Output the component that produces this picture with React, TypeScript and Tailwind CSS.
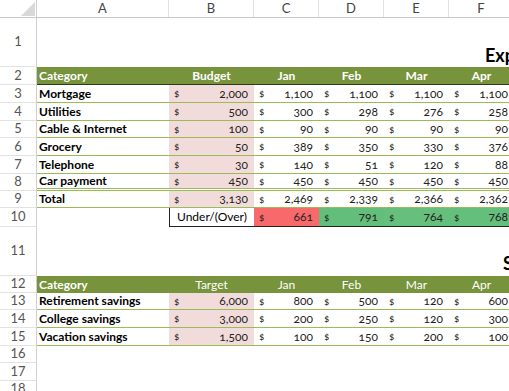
import React from 'react'

const cols = [
  { key: 'A', w: 'w-[132px]' },
  { key: 'B', w: 'w-[85px]' },
  { key: 'C', w: 'w-[65px]' },
  { key: 'D', w: 'w-[65px]' },
  { key: 'E', w: 'w-[65px]' },
  { key: 'F', w: 'w-[65px]' },
]

const months = ['Jan', 'Feb', 'Mar', 'Apr']

const expenses = [
  { name: 'Mortgage', budget: '2,000', vals: ['1,100', '1,100', '1,100', '1,100'], h: 'h-[18px]' },
  { name: 'Utilities', budget: '500', vals: ['300', '298', '276', '258'], h: 'h-[18px]' },
  { name: 'Cable & Internet', budget: '100', vals: ['90', '90', '90', '90'], h: 'h-[17px]' },
  { name: 'Grocery', budget: '50', vals: ['389', '350', '330', '376'], h: 'h-[18px]' },
  { name: 'Telephone', budget: '30', vals: ['140', '51', '120', '88'], h: 'h-[18px]' },
  { name: 'Car payment', budget: '450', vals: ['450', '450', '450', '450'], h: 'h-[17px]' },
]

const savings = [
  { name: 'Retirement savings', target: '6,000', vals: ['800', '500', '120', '600'], h: 'h-[17px]' },
  { name: 'College savings', target: '3,000', vals: ['200', '250', '120', '300'], h: 'h-[18px]' },
  { name: 'Vacation savings', target: '1,500', vals: ['100', '150', '200', '100'], h: 'h-[18px]' },
]

function Row({ n, h, children }: { n: number; h: string; children?: React.ReactNode }) {
  return (
    <div className={`flex ${h}`}>
      <div className="w-[37px] shrink-0 flex items-center justify-center border-r border-b border-r-[#cfcfcf] border-b-[#e2e2e2] text-[13px] text-[#555]">
        {n}
      </div>
      <div className="flex flex-1 min-w-0">{children}</div>
    </div>
  )
}

function Money({ v, w, bg = '', extra = '' }: { v: string; w: string; bg?: string; extra?: string }) {
  return (
    <div className={`${w} shrink-0 flex items-center justify-between pl-[5px] pr-[6px] text-[12px] text-[#222] oldstyle-nums ${bg} ${extra}`}>
      <span className="text-[10px]">$</span>
      <span>{v}</span>
    </div>
  )
}

export default function App() {
  return (
    <div className="w-[509px] h-[391px] overflow-hidden bg-white font-['Lato','Liberation_Sans',sans-serif] text-black">
      {/* column header */}
      <div className="flex h-[18px] border-b border-[#c8c8c8]">
        <div className="w-[37px] shrink-0 border-r border-[#cfcfcf] relative">
          <svg width="37" height="17" className="absolute left-0 top-0">
            <polygon points="21,16 35,16 35,2" fill="#d8d8d8" />
          </svg>
        </div>
        {cols.map((c) => (
          <div
            key={c.key}
            className={`${c.w} shrink-0 flex items-center justify-center border-r border-[#e0e0e0] text-[13px] text-[#444]`}
          >
            {c.key}
          </div>
        ))}
      </div>

      <Row n={1} h="h-[49px]">
        <div className="flex items-end pb-[3px] pl-[448px] whitespace-nowrap text-[18px] font-bold leading-none">
          Expenses
        </div>
      </Row>

      <Row n={2} h="h-[18px]">
        <div className="flex bg-[#77933c] text-white font-bold text-[12px] border-b border-[#2f3a18]">
          <div className="w-[132px] shrink-0 pl-[2px] flex items-center">Category</div>
          <div className="w-[85px] shrink-0 flex items-center justify-center">Budget</div>
          {months.map((m) => (
            <div key={m} className="w-[65px] shrink-0 flex items-center justify-center">
              {m}
            </div>
          ))}
        </div>
      </Row>

      {expenses.map((r, i) => (
        <Row key={r.name} n={i + 3} h={r.h}>
          <div
            className={`flex ${
              i === expenses.length - 1
                ? 'border-b-[3px] border-double border-[#9bbb59]'
                : 'border-b border-[#9bbb59]'
            }`}
          >
            <div className="w-[132px] shrink-0 pl-[2px] flex items-center font-bold text-[12px]">{r.name}</div>
            <Money v={r.budget} w="w-[85px]" bg="bg-[#f2dcdb]" />
            {r.vals.map((v, j) => (
              <Money key={j} v={v} w="w-[65px]" />
            ))}
          </div>
        </Row>
      ))}

      <Row n={9} h="h-[17px]">
        <div className="flex border-b border-[#9bbb59]">
          <div className="w-[132px] shrink-0 pl-[2px] flex items-center font-bold text-[12px]">Total</div>
          <Money v="3,130" w="w-[85px]" bg="bg-[#f2dcdb]" />
          {['2,469', '2,339', '2,366', '2,362'].map((v, j) => (
            <Money key={j} v={v} w="w-[65px]" />
          ))}
        </div>
      </Row>

      <Row n={10} h="h-[19px]">
        <div className="flex">
          <div className="w-[132px] shrink-0" />
          <div className="w-[85px] shrink-0 flex items-center justify-center text-[12px] border-l border-b border-[#222]">
            Under/(Over)
          </div>
          <Money v="661" w="w-[65px]" bg="bg-[#f8696b]" extra="border-b border-[#222]" />
          <Money v="791" w="w-[65px]" bg="bg-[#63be7b]" extra="border-b border-[#222]" />
          <Money v="764" w="w-[65px]" bg="bg-[#66bf7c]" extra="border-b border-[#222]" />
          <Money v="768" w="w-[65px]" bg="bg-[#65bf7c]" extra="border-b border-[#222]" />
        </div>
      </Row>

      <Row n={11} h="h-[49px]">
        <div className="flex items-end pb-[4px] pl-[466px] whitespace-nowrap text-[18px] font-bold leading-none">
          Savings
        </div>
      </Row>

      <Row n={12} h="h-[17px]">
        <div className="flex bg-[#77933c] text-white text-[12px]">
          <div className="w-[132px] shrink-0 pl-[2px] flex items-center font-bold">Category</div>
          <div className="w-[85px] shrink-0 flex items-center justify-center">Target</div>
          {months.map((m) => (
            <div key={m} className="w-[65px] shrink-0 flex items-center justify-center">
              {m}
            </div>
          ))}
        </div>
      </Row>

      {savings.map((r, i) => (
        <Row key={r.name} n={i + 13} h={r.h}>
          <div className="flex border-b border-[#9bbb59]">
            <div className="w-[132px] shrink-0 pl-[2px] flex items-center font-bold text-[12px]">{r.name}</div>
            <Money v={r.target} w="w-[85px]" bg="bg-[#f2dcdb]" />
            {r.vals.map((v, j) => (
              <Money key={j} v={v} w="w-[65px]" />
            ))}
          </div>
        </Row>
      ))}

      <Row n={16} h="h-[17px]" />
      <Row n={17} h="h-[18px]" />
      <Row n={18} h="h-[17px]" />
    </div>
  )
}
